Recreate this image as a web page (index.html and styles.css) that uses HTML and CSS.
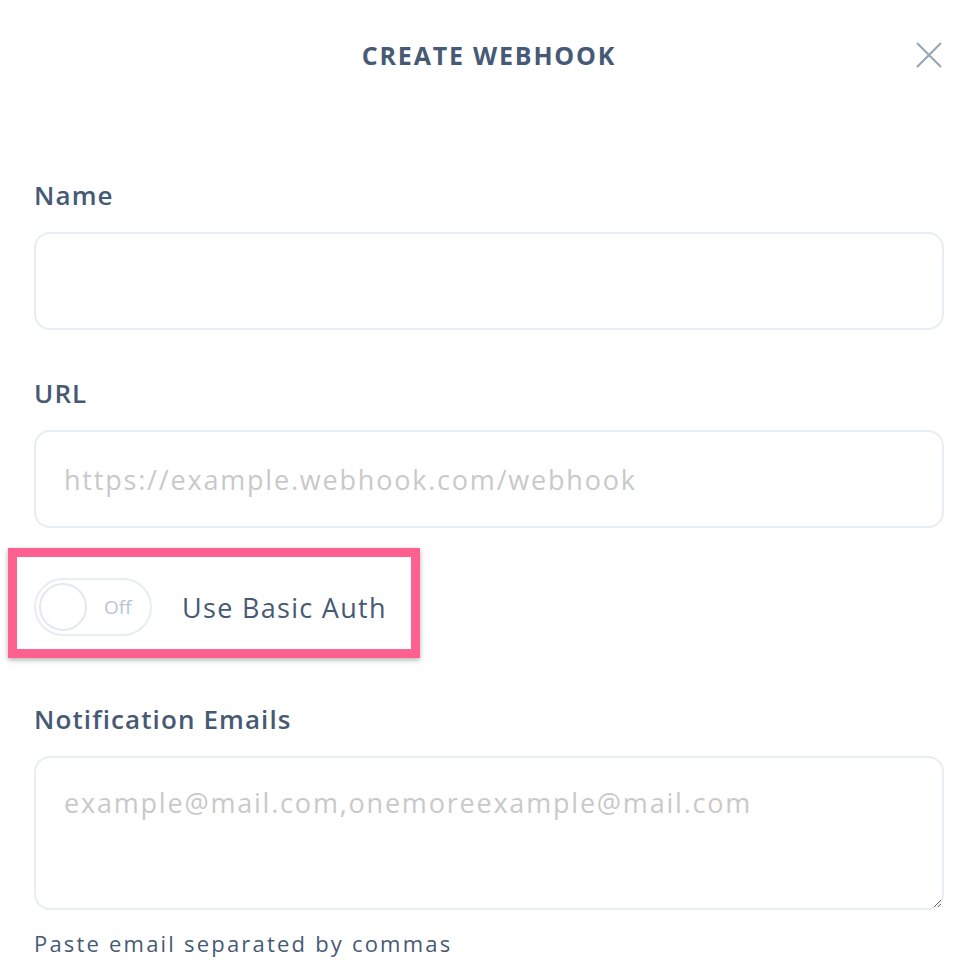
FILE: index.html
```html
<!DOCTYPE html>
<html lang="en">
<head>
  <meta charset="UTF-8" />
  <meta name="viewport" content="width=device-width, initial-scale=1.0" />
  <title>Create Webhook</title>
  <link rel="stylesheet" href="styles.css">
</head>
<body>
  <div class="dialog">
    <header class="dialog-head">
      <h1>CREATE WEBHOOK</h1>
      <button class="close" aria-label="Close">
        <svg width="26" height="26" viewBox="0 0 26 26"><path d="M1 1 L25 25 M25 1 L1 25" stroke="#9ba6b4" stroke-width="2.2" fill="none"/></svg>
      </button>
    </header>

    <form class="form">
      <label class="field-label">Name</label>
      <input class="field" type="text">

      <label class="field-label">URL</label>
      <input class="field" type="text" placeholder="https://example.webhook.com/webhook">

      <div class="auth-row">
        <div class="toggle">
          <span class="knob"></span>
          <span class="toggle-text">Off</span>
        </div>
        <span class="auth-text">Use Basic Auth</span>
        <div class="highlight"></div>
      </div>

      <label class="field-label emails">Notification Emails</label>
      <textarea class="field area" placeholder="example@mail.com,onemoreexample@mail.com"></textarea>
      <p class="hint">Paste email separated by commas</p>
    </form>
  </div>
</body>
</html>
```

FILE: styles.css
```css
body {
  margin: 0;
  background: #fff;
  font-family: 'Open Sans', 'Noto Sans', sans-serif;
  color: #475a75;
}
.dialog {
  padding: 0 36px 0 34px;
}
.dialog-head {
  position: relative;
  height: 110px;
  display: flex;
  align-items: center;
  justify-content: center;
}
.dialog-head h1 {
  margin: 0;
  font-size: 25px;
  font-weight: 700;
  letter-spacing: 1.8px;
  color: #475a75;
}
.close {
  position: absolute;
  right: 2px;
  top: 42px;
  padding: 0;
  border: 0;
  background: none;
}
.form {
  display: flex;
  flex-direction: column;
  padding-top: 65px;
}
.field-label {
  font-size: 26px;
  font-weight: 600;
  line-height: 40px;
  margin-bottom: 17px;
  letter-spacing: 1.1px;
}
.field {
  box-sizing: border-box;
  height: 98px;
  border: 2px solid #e8edf2;
  border-radius: 16px;
  padding: 0 28px;
  font-family: inherit;
  font-size: 27px;
  letter-spacing: 1.8px;
  color: #475a75;
  outline: none;
  margin-bottom: 43px;
}
.field::placeholder {
  color: #c9c9c9;
}
.auth-row {
  position: relative;
  display: flex;
  align-items: center;
  gap: 30px;
  margin-top: 7px;
  margin-bottom: 63px;
}
.toggle {
  box-sizing: border-box;
  width: 118px;
  height: 58px;
  border: 2px solid #e8edf2;
  border-radius: 29px;
  display: flex;
  align-items: center;
  padding: 0 3px;
}
.knob {
  box-sizing: border-box;
  width: 48px;
  height: 48px;
  border: 2px solid #e3e8ef;
  border-radius: 50%;
  background: #fff;
}
.toggle-text {
  margin-left: 17px;
  font-size: 19px;
  color: #b9c3cf;
}
.auth-text {
  font-size: 27px;
  letter-spacing: 1.3px;
}
.highlight {
  position: absolute;
  left: -26px;
  top: -30px;
  width: 412px;
  height: 110px;
  box-sizing: border-box;
  border: 9px solid #fe6090;
  box-shadow: 0 2px 5px rgba(0,0,0,0.3);
}
.emails {
  margin-bottom: 17px;
}
.area {
  height: 154px;
  padding: 26px 28px;
  resize: vertical;
  margin-bottom: 18px;
}
.hint {
  margin: 0;
  font-size: 22px;
  line-height: 30px;
  letter-spacing: 2.2px;
}
```
